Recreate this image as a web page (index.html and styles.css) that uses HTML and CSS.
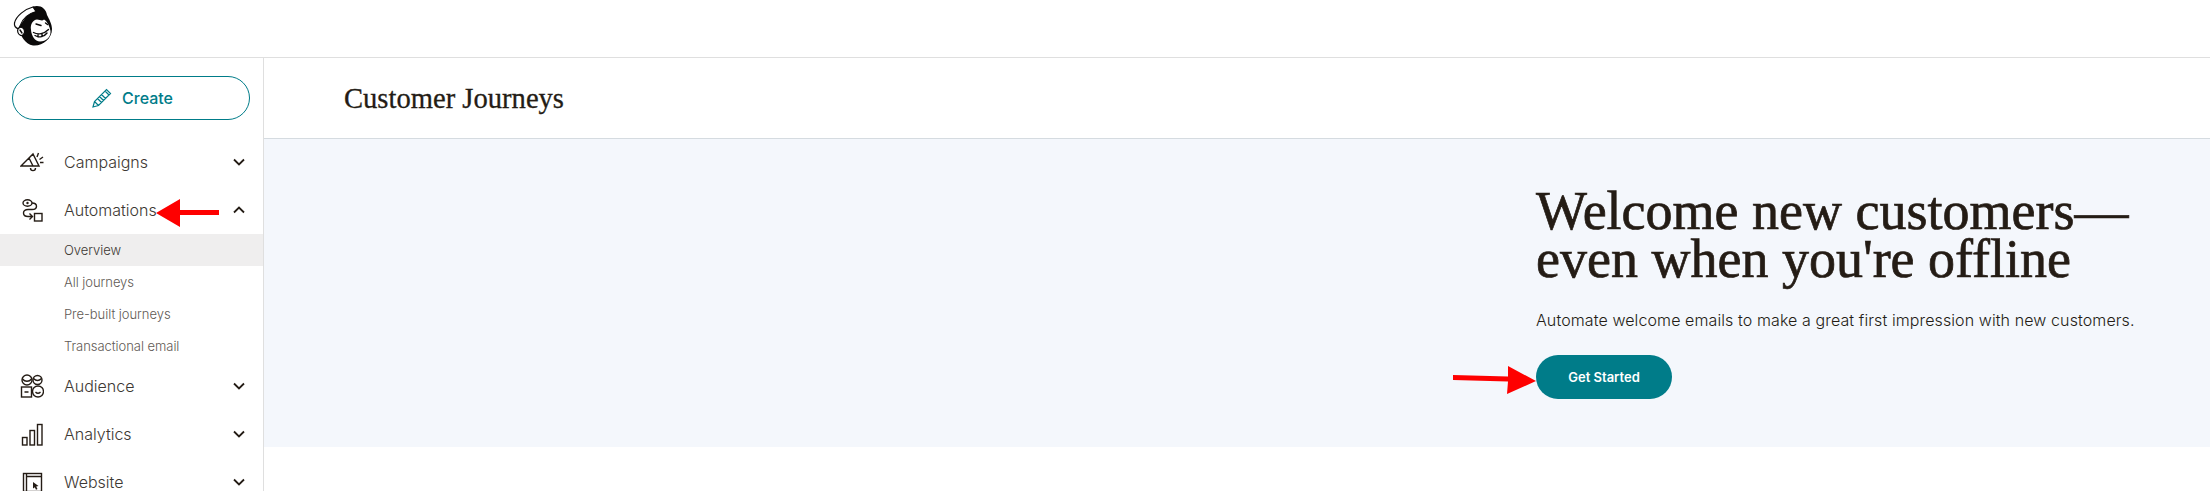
FILE: index.html
```html
<!DOCTYPE html>
<html lang="en">
<head>
<meta charset="utf-8">
<title>Customer Journeys</title>
<link rel="stylesheet" href="styles.css">
</head>
<body>
<header class="topbar">
  <svg class="logo" viewBox="12 4 40 44" width="40" height="44" aria-label="Mailchimp">
    <path class="ink" d="M19 27 C20 36 25 44 33 45.500 C42 46.500 52 39 52 29 C52 24 49 19 47 15 C46 8 40 4.500 33 6.500 L28 14 Z"/>
    <path class="cap" d="M14.500 23 C16 16 25 9 33 7 L36 11.500 C29 13.500 23 18 20.500 25 L18.500 29 C16 28 14 26 14.500 23 Z"/>
    <path class="paper" d="M31 30 C30 24 33 20 37 19.500 C40 19.500 42 21.500 44 19.500 C47 21 50 27 50.500 31 C51 37 46 41.500 40 41.500 C35 41.500 31.500 36 31 30 Z"/>
    <path class="ear" d="M18 29 C20 26 24 27 24.500 31 C25 34 22 36.500 20 35 C18 34 17 31 18 29 Z"/>
    <path class="ink-line" d="M36 24 L41 25.500 M45.500 23 L47.500 24.500 M33.500 32.500 C38 35 44 34 48.500 29.500 M35 35.500 C39 38 44 37 47 33 M38 34 L38 37 M42 33.500 L42 36.500 M20 30 L22 33"/>
  </svg>
</header>
<div class="shell">
  <aside class="sidebar">
    <div class="create-wrap">
      <a class="create" href="#">
        <svg viewBox="0 0 20 20" width="20" height="20" class="pencil"><path d="M1 19 L2.500 13.500 L14.500 1.500 L18.500 5.500 L6.500 17.500 Z M2.500 13.500 L6.500 17.500 M13 3 L17 7 M5.500 10.500 L9.500 14.500 M7.500 8.500 L11.500 12.500 M9.500 6.500 L13.500 10.500"/></svg>
        <span>Create</span>
      </a>
    </div>
    <nav class="nav">
      <a class="nav-row" href="#">
        <svg class="nav-icon" viewBox="0 0 24 24"><path d="M1 16 L13 4 L19 16 Z M9 8 L13 16 M10.500 18 C10.500 21.500 15.500 21.500 15.500 18 M18.500 3 L17 7 M23 7 L19.500 9.500 M23.500 12.500 L20 12.500"/></svg>
        <span class="nav-label">Campaigns</span>
        <svg class="chev" viewBox="0 0 12 8"><path d="M1 1.500 L6 6.500 L11 1.500"/></svg>
      </a>
      <a class="nav-row" href="#">
        <svg class="nav-icon" viewBox="0 0 24 24"><ellipse cx="7.500" cy="5" rx="4.500" ry="3.200"/><circle class="dot" cx="7.500" cy="5" r="1.200"/><path d="M12 5 C18 5 18 11.500 12 11.500 L8 11.500 C2 11.500 2 18.500 8 18.500 L12 18.500 M9.500 15.500 L12.500 18.500 L9.500 21.500"/><rect x="14.500" y="15.500" width="7.500" height="7.500"/></svg>
        <span class="nav-label">Automations</span>
        <svg class="chev" viewBox="0 0 12 8"><path d="M1 6.500 L6 1.500 L11 6.500"/></svg>
      </a>
      <ul class="subnav">
        <li class="sub-row active">Overview</li>
        <li class="sub-row">All journeys</li>
        <li class="sub-row">Pre-built journeys</li>
        <li class="sub-row">Transactional email</li>
      </ul>
      <a class="nav-row" href="#">
        <svg class="nav-icon" viewBox="0 0 24 24"><circle cx="7" cy="6" r="5"/><circle cx="17.500" cy="6" r="4.500"/><rect x="1.500" y="13" width="10" height="10"/><circle cx="18" cy="17.500" r="5.500"/><path d="M2.500 5 C5 8 9 8 11.500 5 M13.500 4.500 C16 7 19 7 21.500 4.500 M4.500 18 L8.500 18 M15.500 18 C17 19.500 19 19.500 20.500 18"/></svg>
        <span class="nav-label">Audience</span>
        <svg class="chev" viewBox="0 0 12 8"><path d="M1 1.500 L6 6.500 L11 1.500"/></svg>
      </a>
      <a class="nav-row" href="#">
        <svg class="nav-icon" viewBox="0 0 24 24"><rect x="2.500" y="15.500" width="4.500" height="7.500"/><rect x="10" y="8.500" width="4.500" height="14.500"/><rect x="17.500" y="2.500" width="4.500" height="20.500"/></svg>
        <span class="nav-label">Analytics</span>
        <svg class="chev" viewBox="0 0 12 8"><path d="M1 1.500 L6 6.500 L11 1.500"/></svg>
      </a>
      <a class="nav-row" href="#">
        <svg class="nav-icon" viewBox="0 0 24 24"><rect x="3.500" y="3.500" width="18" height="18"/><path d="M6.500 3.500 L6.500 21.500 M6.500 6.500 L21.500 6.500"/><path class="fill" d="M13 12 L18.500 16 L16.200 16.500 L17.500 19 L16 19.700 L14.800 17.200 L13 18.500 Z"/></svg>
        <span class="nav-label">Website</span>
        <svg class="chev" viewBox="0 0 12 8"><path d="M1 1.500 L6 6.500 L11 1.500"/></svg>
      </a>
    </nav>
  </aside>
  <main class="main">
    <div class="title-bar"><h1 class="page-title">Customer Journeys</h1></div>
    <section class="hero">
      <div class="hero-copy">
        <h2 class="hero-title">Welcome new customers—<br>even when you're offline</h2>
        <p class="hero-text">Automate welcome emails to make a great first impression with new customers.</p>
        <a class="cta" href="#">Get Started</a>
      </div>
    </section>
  </main>
</div>
<svg class="annotations" viewBox="0 0 2210 491" width="2210" height="491" aria-hidden="true">
  <path d="M156 213 L180 199 L180 210 L219 210 L219 215 L180 215 L180 227 Z"/>
  <path d="M1536 381 L1508 366 L1508 376.500 L1453 375 L1453 380 L1508 381.500 L1507 394 Z"/>
</svg>
</body>
</html>
```
FILE: styles.css
```css
* { box-sizing: border-box; }
html, body { margin: 0; height: 491px; overflow: hidden; background: #fff; }
body { font-family: "Inter", "Liberation Sans", sans-serif; color: #241c15; position: relative; }
a { color: inherit; text-decoration: none; }

.topbar { height: 58px; border-bottom: 1px solid #dfdfdf; padding: 4px 0 0 12px; }
.logo { display: block; }
.ink { fill: #0b0a0a; }
.paper { fill: #fff; }
.cap { fill: #fff; stroke: #0b0a0a; stroke-width: 1.200; }
.ear { fill: #fff; stroke: #0b0a0a; stroke-width: 1.200; }
.ink-line { fill: none; stroke: #0b0a0a; stroke-width: 1.400; stroke-linecap: round; }

.shell { display: flex; height: 433px; }
.sidebar { width: 264px; flex: none; border-right: 1px solid #dfdfdf; overflow: hidden; }
.create-wrap { padding: 18px 13px 18px 12px; }
.create { display: flex; align-items: center; justify-content: center; gap: 10px; height: 44px; padding-left: 3px; border: 1px solid #007c89; border-radius: 22px; color: #007c89; font-size: 16px; font-weight: 500; }
.pencil { fill: none; stroke: #007c89; stroke-width: 1.200; }

.nav-row { display: flex; align-items: center; height: 48px; padding: 0 18px 0 20px; }
.nav-icon { width: 24px; height: 24px; flex: none; fill: none; stroke: #241c15; stroke-width: 1.400; }
.nav-icon .dot { fill: #241c15; stroke: none; }
.nav-icon .fill { fill: #241c15; stroke: none; }
.nav-label { margin-left: 20px; flex: 1; font-size: 16px; font-weight: 350; color: #3d3833; }
.chev { width: 12px; height: 8px; fill: none; stroke: #241c15; stroke-width: 1.800; }

.subnav { list-style: none; margin: 0; padding: 0; }
.sub-row { height: 32px; line-height: 32px; padding-left: 64px; font-size: 13px; font-weight: 350; letter-spacing: -0.05px; color: #5f5a55; }
.sub-row.active { background: #efeeee; color: #3d3833; }

.main { flex: 1; min-width: 0; }
.title-bar { height: 81px; display: flex; align-items: center; padding: 2px 0 0 80px; border-bottom: 1px solid #d5dbe0; }
.page-title { margin: 0; font-family: "Liberation Serif", serif; font-size: 28.600px; font-weight: 400; -webkit-text-stroke: 0.3px #241c15; color: #241c15; }
.hero { height: 308px; background: #f4f7fc; display: flex; justify-content: flex-end; padding: 48px 72px 0 0; }
.hero-copy { width: 602px; }
.hero-title { margin: 0; font-family: "Liberation Serif", serif; font-size: 54px; line-height: 48px; font-weight: 400; -webkit-text-stroke: 0.7px #241c15; color: #241c15; white-space: nowrap; }
.hero-text { margin: 25px 0 0; font-size: 16px; line-height: 24px; font-weight: 350; letter-spacing: 0.1px; color: #241c15; white-space: nowrap; }
.cta { display: flex; align-items: center; justify-content: center; width: 136px; height: 44px; margin-top: 23px; background: #007c89; color: #fff; border-radius: 22px; font-size: 13px; font-weight: 600; }

.annotations { position: absolute; left: 0; top: 0; pointer-events: none; }
.annotations path { fill: #fe0000; }
```
